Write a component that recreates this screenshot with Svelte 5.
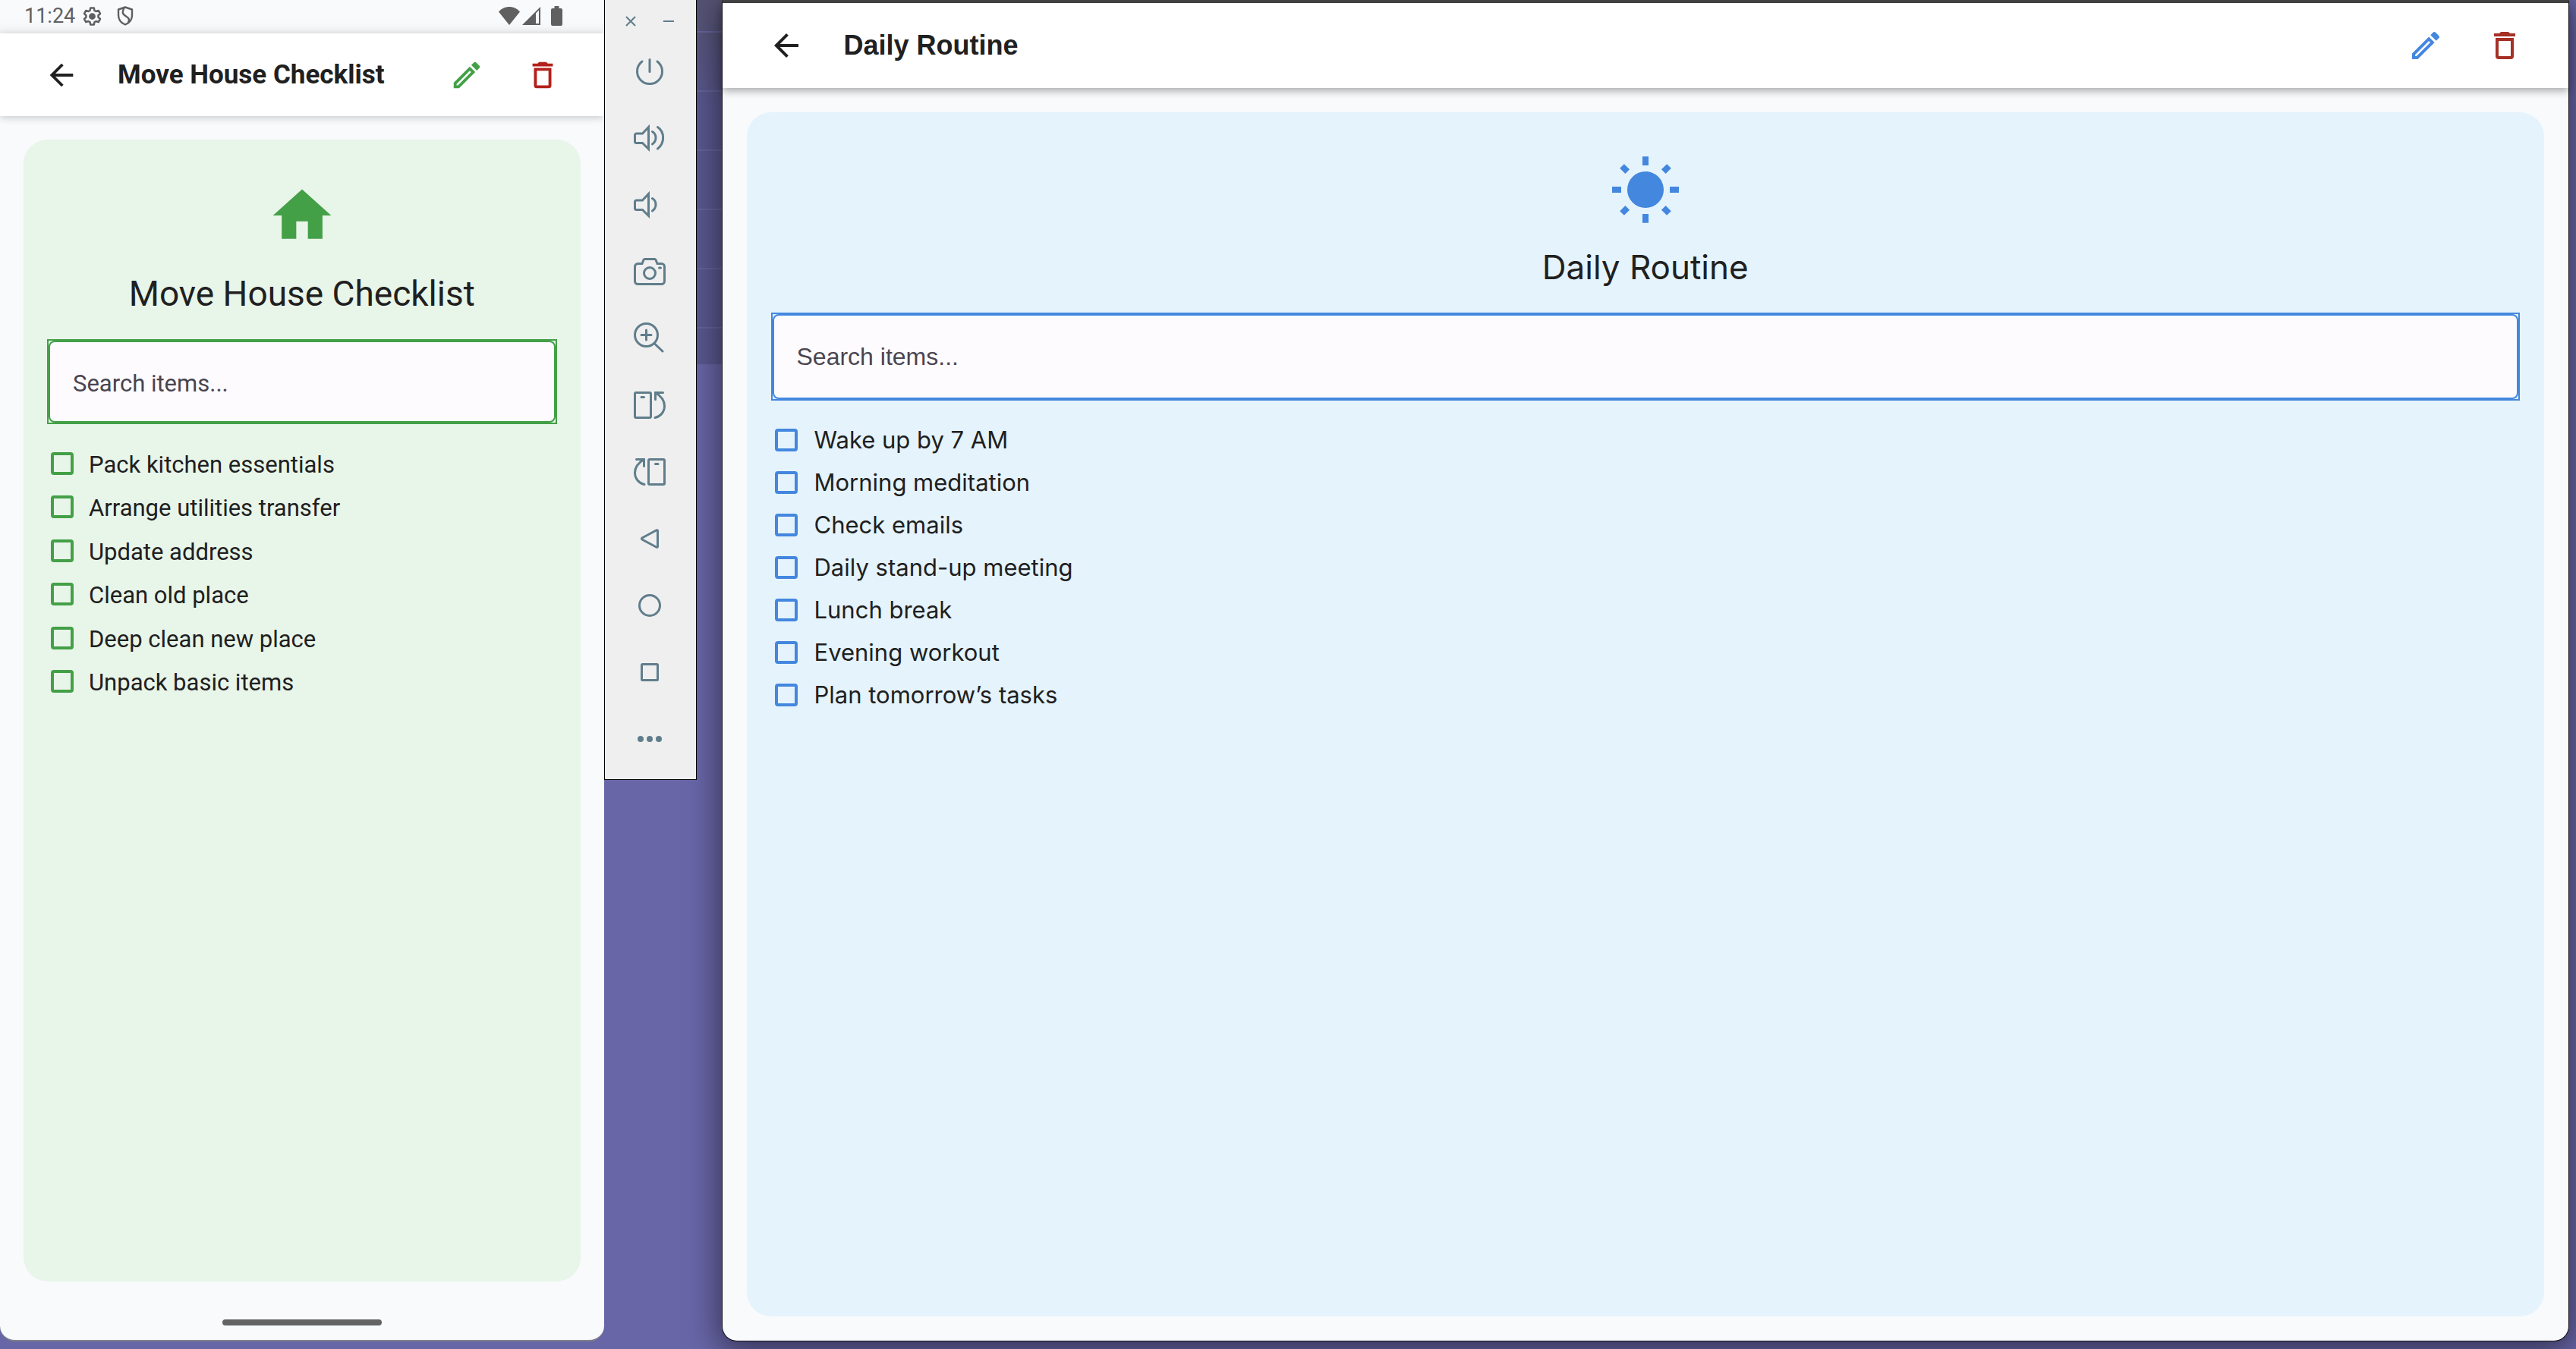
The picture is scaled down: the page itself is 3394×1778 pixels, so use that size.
<script>
  const icons = {
    back: 'M20 11H7.83l5.59-5.59L12 4l-8 8 8 8 1.41-1.41L7.83 13H20v-2z',
    pencil:
      'M14.06,9L15,9.94L5.92,19H5V18.08L14.06,9M17.66,3C17.41,3 17.15,3.1 16.96,3.29L15.13,5.12L18.88,8.87L20.71,7.04C21.1,6.65 21.1,6 20.71,5.63L18.37,3.29C18.17,3.09 17.92,3 17.66,3M14.06,6.19L3,17.25V21H6.75L17.81,9.94L14.06,6.19Z',
    trash:
      'M6,19A2,2 0 0,0 8,21H16A2,2 0 0,0 18,19V7H6V19M8,9H16V19H8V9M15.5,4L14.5,3H9.5L8.5,4H5V6H19V4H15.5Z',
    home: 'M10 20v-6h4v6h5v-8h3L12 3 2 12h3v8z',
    sun: 'M3.55,18.54L4.96,19.95L6.76,18.16L5.34,16.74M11,22.45C11.32,22.45 13,22.45 13,22.45V19.5H11M12,5.5A6,6 0 0,0 6,11.5A6,6 0 0,0 12,17.5A6,6 0 0,0 18,11.5C18,8.18 15.31,5.5 12,5.5M20,12.5H23V10.5H20M17.24,18.16L19.04,19.95L20.45,18.54L18.66,16.74M20.45,4.46L19.04,3.05L17.24,4.84L18.66,6.26M13,0.55H11V3.5H13M4,10.5H1V12.5H4M6.76,4.84L4.96,3.05L3.55,4.46L5.34,6.26L6.76,4.84Z'
  };

  const move = {
    id: 'move',
    title: 'Move House Checklist',
    icon: icons.home,
    items: [
      'Pack kitchen essentials',
      'Arrange utilities transfer',
      'Update address',
      'Clean old place',
      'Deep clean new place',
      'Unpack basic items'
    ]
  };

  const daily = {
    id: 'daily',
    title: 'Daily Routine',
    icon: icons.sun,
    items: [
      'Wake up by 7 AM',
      'Morning meditation',
      'Check emails',
      'Daily stand-up meeting',
      'Lunch break',
      'Evening workout',
      'Plan tomorrow’s tasks'
    ]
  };

  const speaker = 'M20.5 7.5V36.5L12.5 28.5H4.5a2 2 0 0 1-2-2V18a2 2 0 0 1 2-2h8z';
  const tools = [
    { name: 'Power', d: 'M12 9A16.5 16.5 0 1 0 32 9M22 6.5V22.5' },
    { name: 'Volume up', d: speaker + 'M25.5 13.5C31.5 17 31.5 26 25.5 30M32.5 7.5C42 14 42 29 32.5 36' },
    { name: 'Volume down', d: speaker + 'M25.5 13.5C31.5 17 31.5 26 25.5 30' },
    {
      name: 'Take screenshot',
      d: 'M6.5 11.5H12l2-5a2 2 0 0 1 1.5-1H28.5a2 2 0 0 1 1.5 1l2 5h5.5a4 4 0 0 1 4 4V34.5a4 4 0 0 1-4 4H6.5a4 4 0 0 1-4-4V15.5a4 4 0 0 1 4-4zM29.5 24a7.5 7.5 0 1 1-15 0a7.5 7.5 0 0 1 15 0M34.5 17h2'
    },
    { name: 'Zoom', d: 'M32.5 17.5a15 15 0 1 1-30 0a15 15 0 0 1 30 0M28 28.5L39 39M17.5 11V24M11 17.5H24' },
    {
      name: 'Rotate left',
      d: 'M4 5.5H22a1.5 1.5 0 0 1 1.5 1.5V37a1.5 1.5 0 0 1-1.5 1.5H4A1.5 1.5 0 0 1 2.5 37V7A1.5 1.5 0 0 1 4 5.5zM11 11.5H14.5M39.5 5.5H29.5V14.5M29.5 5.5C37 10 41.5 16 41.5 23C41.5 31 36 37 29 38.5'
    },
    {
      name: 'Rotate right',
      d: 'M22 5.5H40a1.5 1.5 0 0 1 1.5 1.5V37a1.5 1.5 0 0 1-1.5 1.5H22a1.5 1.5 0 0 1-1.5-1.5V7A1.5 1.5 0 0 1 22 5.5zM29.5 11.5H33M4.5 5.5H14.5V14.5M14.5 5.5C7 10 2.5 16 2.5 23C2.5 31 8 37 15 38.5'
    },
    { name: 'Back', d: 'M31 10.8L12 21a1.2 1.2 0 0 0 0 2L31 33.2a1 1 0 0 0 1.5-1V11.8a1 1 0 0 0-1.5-1z' },
    { name: 'Home', d: 'M35.5 22a13.5 13.5 0 1 1-27 0a13.5 13.5 0 0 1 27 0' },
    { name: 'Overview', d: 'M12.5 11.5H31.5a1 1 0 0 1 1 1V31.5a1 1 0 0 1-1 1H12.5a1 1 0 0 1-1-1V12.5a1 1 0 0 1 1-1z' },
    { name: 'More', dots: [10, 22, 34] }
  ];
</script>

{#snippet glyph(d)}
  <svg viewBox="0 0 24 24" aria-hidden="true"><path {d} /></svg>
{/snippet}

{#snippet screen(list)}
  <header class="appbar">
    <button class="icon-btn" aria-label="Back">{@render glyph(icons.back)}</button>
    <h1>{list.title}</h1>
    <button class="icon-btn accent" aria-label="Edit">{@render glyph(icons.pencil)}</button>
    <button class="icon-btn danger" aria-label="Delete">{@render glyph(icons.trash)}</button>
  </header>
  <main class="card">
    <div class="hero">{@render glyph(list.icon)}</div>
    <h2>{list.title}</h2>
    <div class="field">
      <input type="text" placeholder="Search items..." aria-label="Search items" />
    </div>
    <ul>
      {#each list.items as item, i}
        <li>
          <input type="checkbox" id="{list.id}-{i}" />
          <label for="{list.id}-{i}">{item}</label>
        </li>
      {/each}
    </ul>
  </main>
{/snippet}

<div class="desktop">
  <section class="phone">
    <div class="status">
      <span class="time">11:24</span>
      <svg class="gear" viewBox="0 0 24 24" aria-hidden="true">
        <path
          class="line"
          d="M9.8 1.5h4.4l.7 3.2 1.9 1.1 3.1-1 2.2 3.8-2.4 2.2v2.4l2.4 2.2-2.2 3.8-3.1-1-1.9 1.1-.7 3.2H9.8l-.7-3.2-1.9-1.1-3.1 1-2.2-3.8 2.4-2.2v-2.4L1.9 8.6l2.2-3.8 3.1 1 1.9-1.1z"
        />
        <circle cx="12" cy="12" r="4.2" />
      </svg>
      <svg class="shield" viewBox="0 0 22 26" aria-hidden="true">
        <path class="line" d="M11 1.5L20 4.5V12c0 6-4 10.5-9 12.5C6 22.5 2 18 2 12V4.5z" />
        <path class="line" d="M9.5 2.5C6 9 8 11 12 13.5s5 4 3 8" />
      </svg>
      <span class="spacer"></span>
      <svg class="wifi" viewBox="0 0 28 24" aria-hidden="true">
        <path d="M14 24L0 6.5C4 2 9 0 14 0s10 2 14 6.5z" />
      </svg>
      <svg class="signal" viewBox="0 0 24 24" aria-hidden="true">
        <path fill-rule="evenodd" d="M24 0V24H0zM18 8.5V22h4V4.5z" />
      </svg>
      <svg class="battery" viewBox="0 0 15 26" aria-hidden="true">
        <path d="M4.5 0h6v3H13a2 2 0 0 1 2 2v19a2 2 0 0 1-2 2H2a2 2 0 0 1-2-2V5a2 2 0 0 1 2-2h2.5z" />
      </svg>
    </div>
    {@render screen(move)}
    <div class="navbar"><span></span></div>
  </section>

  <aside class="tools">
    <div class="window-controls">
      <button aria-label="Close"><svg viewBox="0 0 14 14"><path d="M1 1L13 13M13 1L1 13" /></svg></button>
      <button aria-label="Minimize"><svg viewBox="0 0 14 14"><path d="M0 7H14" /></svg></button>
    </div>
    {#each tools as tool}
      <button class="tool" aria-label={tool.name}>
        <svg viewBox="0 0 44 44">
          {#if tool.dots}
            {#each tool.dots as x}<circle cx={x} cy="22" r="4" />{/each}
          {:else}
            <path d={tool.d} />
          {/if}
        </svg>
      </button>
    {/each}
  </aside>

  <div class="strip"><div class="rows"></div></div>

  <section class="window">
    {@render screen(daily)}
  </section>
</div>

<style>
  :global(body) {
    margin: 0;
  }
  .desktop {
    display: flex;
    align-items: flex-start;
    box-sizing: border-box;
    min-height: 100vh;
    padding-right: 9px;
    background: #6966a8;
    overflow: hidden;
    color: #202020;
  }
  .desktop * {
    box-sizing: border-box;
  }
  svg {
    display: block;
    fill: currentColor;
  }
  button {
    display: flex;
    align-items: center;
    justify-content: center;
    margin: 0;
    padding: 0;
    border: 0;
    background: none;
    color: inherit;
    cursor: pointer;
  }
  h1,
  h2,
  ul {
    margin: 0;
    padding: 0;
  }

  .phone,
  .window {
    display: flex;
    flex-direction: column;
    min-width: 0;
    min-height: calc(100vh - 10px);
    background: #f9fafc;
  }
  .phone {
    --accent: #43a047;
    --tint: #e8f5e9;
    --danger: #b3201a;
    --icon: 46px;
    flex: 796 1 0;
    border-bottom: 2px solid #808088;
    border-radius: 0 0 20px 20px;
    font-family: Roboto, sans-serif;
  }
  .window {
    --accent: #4387df;
    --tint: #e5f3fc;
    --danger: #a63026;
    --icon: 48px;
    position: relative;
    flex: 2434 1 0;
    border: 1px solid #14121c;
    border-top: 4px solid #434343;
    border-radius: 0 0 20px 20px;
    box-shadow: 0 10px 44px 4px rgba(0, 0, 0, 0.5);
    font-family: Inter, sans-serif;
  }

  .status {
    display: flex;
    align-items: center;
    height: 44px;
    padding: 0 55px 2px 32px;
    background: linear-gradient(#f9fafc 60%, #f1f2f4);
    color: #606060;
  }
  .time {
    margin-right: 10px;
    font-size: 27px;
    line-height: 32px;
  }
  .line {
    fill: none;
    stroke: currentColor;
    stroke-width: 2.4;
    stroke-linejoin: round;
  }
  .gear {
    width: 25px;
    height: 25px;
    margin-right: 20px;
  }
  .shield {
    width: 22px;
    height: 26px;
  }
  .spacer {
    flex: 1;
  }
  .wifi {
    width: 28px;
    height: 24px;
    margin-right: 3px;
  }
  .signal {
    width: 24px;
    height: 24px;
    margin-right: 14px;
  }
  .battery {
    width: 15px;
    height: 26px;
  }

  .appbar {
    display: flex;
    align-items: center;
    background: #fff;
    z-index: 1;
  }
  .phone .appbar {
    height: 109px;
    padding: 0 31px;
    box-shadow: 0 2px 10px rgba(0, 0, 0, 0.2);
  }
  .window .appbar {
    height: 112px;
    padding: 0 32px;
    box-shadow: 0 4px 10px rgba(0, 0, 0, 0.32);
  }
  .appbar h1 {
    flex: 1;
    padding-left: 24px;
    font-weight: 700;
    white-space: nowrap;
  }
  .phone h1 {
    font-size: 35px;
  }
  .window h1 {
    font-family: "Liberation Sans", Arial, sans-serif;
    font-size: 36px;
  }
  .icon-btn {
    width: 100px;
    height: 100px;
  }
  .window .icon-btn {
    width: 104px;
    height: 104px;
  }
  .icon-btn svg {
    width: var(--icon);
    height: var(--icon);
  }
  .accent {
    color: var(--accent);
  }
  .danger {
    color: var(--danger);
  }

  .card {
    display: flex;
    flex-direction: column;
    flex: 1;
    border-radius: 32px;
    background: var(--tint);
  }
  .phone .card {
    margin: 31px 31px 0;
    padding: 54px 31px 31px;
  }
  .window .card {
    margin: 32px;
    padding: 56px 32px 32px;
  }
  .hero {
    align-self: center;
    color: var(--accent);
  }
  .phone .hero svg {
    width: 92px;
    height: 92px;
  }
  .window .hero svg {
    width: 96px;
    height: 96px;
  }
  h2 {
    font-weight: 400;
    line-height: 72px;
    text-align: center;
  }
  .phone h2 {
    margin: 21px 0 24px;
    font-size: 46px;
  }
  .window h2 {
    margin: 16px 0 24px;
    font-size: 44px;
  }
  .field {
    display: flex;
    border: 2px solid var(--accent);
  }
  .field input {
    flex: 1;
    min-width: 0;
    padding: 0 30px;
    border: 2px solid var(--accent);
    border-radius: 8px;
    outline: 0;
    background: #fefbff;
    color: #202020;
    font: inherit;
  }
  .phone .field input {
    height: 108px;
    padding-top: 4px;
    font-size: 31px;
  }
  .window .field input {
    height: 112px;
    font-family: "Liberation Sans", Arial, sans-serif;
    font-size: 32px;
  }
  .field input::placeholder {
    color: #49454f;
    opacity: 1;
  }
  ul {
    display: grid;
    grid-auto-rows: 1fr;
    font-size: 31px;
    list-style: none;
  }
  .phone ul {
    min-height: 345px;
    margin-top: 23px;
  }
  .window ul {
    min-height: 392px;
    margin-top: 24px;
  }
  li {
    display: flex;
    align-items: center;
    gap: 20px;
    padding-left: 5px;
    line-height: 40px;
  }
  .window li {
    gap: 22px;
  }
  .phone label {
    padding-top: 4px;
  }
  li input {
    appearance: none;
    width: 30px;
    height: 30px;
    margin: 0;
    border: 4px solid var(--accent);
    border-radius: 4px;
  }

  .navbar {
    display: flex;
    justify-content: center;
    height: 77px;
    padding-top: 50px;
  }
  .navbar span {
    width: 210px;
    height: 8px;
    border-radius: 4px;
    background: #646464;
  }

  .tools {
    position: relative;
    z-index: 1;
    display: flex;
    flex-direction: column;
    align-items: center;
    flex: 0 0 122px;
    padding: 0 2px 9px 0;
    border: 1px solid #000;
    border-top: 0;
    background: #efefef;
    color: #607d8b;
  }
  .tools svg {
    width: 44px;
    height: 44px;
  }
  .tools path {
    fill: none;
    stroke: currentColor;
    stroke-width: 3;
    stroke-linecap: round;
  }
  .tool {
    width: 100%;
    height: 88px;
  }
  .window-controls {
    display: flex;
    gap: 36px;
    height: 50px;
    padding-top: 6px;
  }
  .window-controls svg {
    width: 14px;
    height: 14px;
  }
  .window-controls path {
    stroke-width: 2;
    stroke-linecap: butt;
  }

  .strip {
    flex: 0 0 33px;
  }
  .rows {
    height: 480px;
    background:
      repeating-linear-gradient(transparent 0 41px, #66649c 41px 43px, transparent 43px 78px),
      linear-gradient(#565474, #5a5890 30%);
  }
</style>
